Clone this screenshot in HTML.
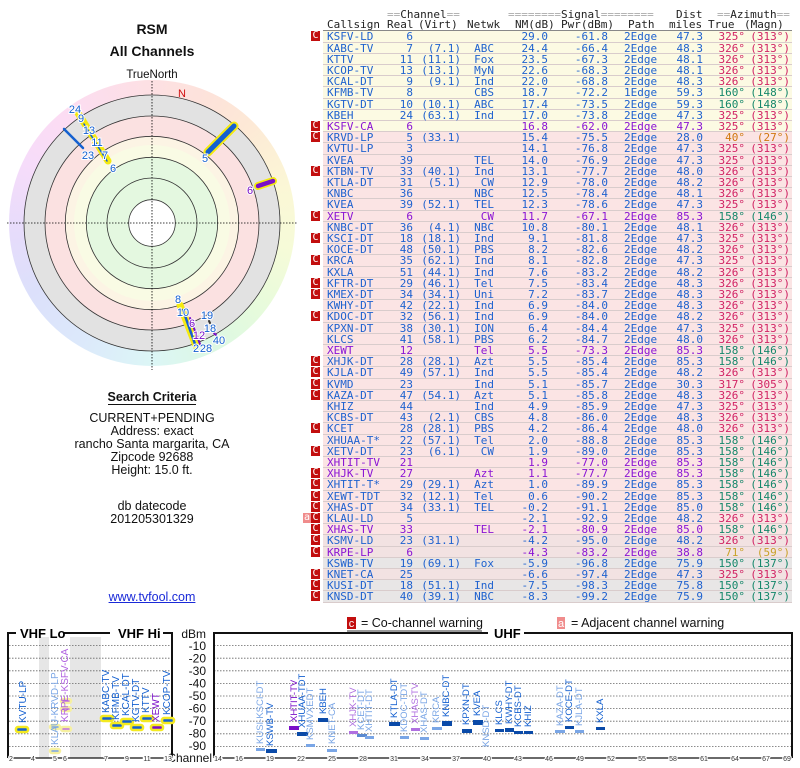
<!DOCTYPE html>
<html><head><meta charset="utf-8"><style>
*{margin:0;padding:0;box-sizing:border-box}
body{width:800px;height:768px;background:#fff;position:relative;overflow:hidden;font-family:"Liberation Sans",sans-serif;color:#111}
.ctr{position:absolute;left:0;width:304px;text-align:center;white-space:nowrap;font-size:12.5px;line-height:13px}
.mono{font-family:"DejaVu Sans Mono","Liberation Mono",monospace;font-size:11px}
.r{position:absolute;left:323px;width:469px;height:11.2px;line-height:11px;border-bottom:1px solid #d9cccc;color:#1f62cf}
.r span{position:absolute;top:0;white-space:pre}
.y{background:#fcfae3}.k{background:#fbe4e4}.q{background:#f2e2e2}.w{background:#e8e6e6}
.a{left:4px}.b{left:60px;width:30px;text-align:right}.c{left:95px;width:43px;text-align:right}
.d{left:140px;width:31px;text-align:right}.e{left:180px;width:45px;text-align:right}
.f{left:240px;width:45px;text-align:right}.g{left:301px}.h{left:335px;width:45px;text-align:right}
.i{left:380px;width:42px;text-align:right}.j{left:422px;width:45px;text-align:right}
.r .m{color:#d12364}.r .n{color:#14876a}.r .o{color:#d0780f}.r .u{color:#c9a22a}
.p{color:#8a14d4}
i{font-style:normal}
.C{position:absolute;left:-12px;top:0;width:9px;height:10px;background:#c20e0e;color:#fff;font-size:10px;line-height:10px;text-align:center}
.A{position:absolute;left:-20px;top:0;width:8px;height:10px;background:#f08c8c;color:#fff;font-size:10px;line-height:10px;text-align:center}
#nm{position:absolute;left:504px;top:31px;width:54px;height:572px;background:rgba(90,70,40,0.09)}
.hd{position:absolute;left:323px;width:469px;height:11px;line-height:11px;color:#222}
.hd .x{position:absolute;top:0;white-space:pre}
.hd .z{color:#aaa}
</style></head><body>

<div class="ctr" style="top:22px;font-weight:bold;font-size:14px;line-height:15px">RSM</div>
<div class="ctr" style="top:44px;font-weight:bold;font-size:14px;line-height:15px">All Channels</div>
<div class="ctr" style="top:69px;font-size:11.5px">TrueNorth</div>

<div style="position:absolute;left:9px;top:80px;width:286px;height:286px;border-radius:50%;background:conic-gradient(#fde0e3 0deg,#fde3da 25deg,#fde9d6 45deg,#fbf7d6 75deg,#f6fbd8 100deg,#e6fbdc 130deg,#dcf8e4 155deg,#dcf6f6 180deg,#dce9fb 210deg,#dce0fb 240deg,#e6dcfb 265deg,#f6dcfa 295deg,#fcdcf3 320deg,#fde0e3 360deg)"></div>
<svg style="position:absolute;left:0;top:0" width="304" height="380">
<circle cx="152" cy="223" r="128" fill="#e2e2e2" stroke="#333" stroke-width="0.8"/>
<circle cx="152" cy="223" r="107" fill="#fbe1e1" stroke="#333" stroke-width="0.8"/>
<circle cx="152" cy="223" r="86.7" fill="#fcf4e4" stroke="#333" stroke-width="0.8"/>
<circle cx="152" cy="223" r="78" fill="#f9fbe4" stroke="none"/>
<circle cx="152" cy="223" r="65.7" fill="#e4f8e0" stroke="#333" stroke-width="0.8"/>
<circle cx="152" cy="223" r="45" fill="#e4f8e0" stroke="#333" stroke-width="0.8"/>
<circle cx="152" cy="223" r="23.3" fill="#fff" stroke="#333" stroke-width="0.8"/>
<line x1="7" y1="223" x2="297" y2="223" stroke="#000" stroke-width="0.8" stroke-dasharray="1.5,1.5"/>
<line x1="152" y1="81" x2="152" y2="370" stroke="#000" stroke-width="0.8" stroke-dasharray="1.5,1.5"/>
<text x="182" y="97" fill="#d01010" font-size="11" text-anchor="middle">N</text>
<g stroke-linecap="round">
<line x1="208" y1="152" x2="234" y2="126" stroke="#f4ea10" stroke-width="9"/>
<line x1="208" y1="152" x2="234" y2="126" stroke="#1460d0" stroke-width="5"/>
<line x1="258" y1="186" x2="273" y2="181" stroke="#f4ea10" stroke-width="8"/>
<line x1="258" y1="186" x2="273" y2="181" stroke="#7a10c8" stroke-width="4.5"/>
<line x1="78" y1="113" x2="108" y2="161" stroke="#f4ea10" stroke-width="7"/>
<line x1="84" y1="124" x2="107" y2="161" stroke="#1460d0" stroke-width="1.5"/>
<line x1="64" y1="129" x2="83" y2="148" stroke="#1460d0" stroke-width="2.5"/>
<line x1="180" y1="305" x2="196" y2="346" stroke="#f4ea10" stroke-width="7"/>
<line x1="183" y1="310" x2="195" y2="344" stroke="#1460d0" stroke-width="2.5"/>
<line x1="190" y1="318" x2="200" y2="344" stroke="#7a10c8" stroke-width="2"/>
<line x1="209" y1="321" x2="210" y2="323" stroke="#333" stroke-width="2"/>
<line x1="214" y1="333" x2="216" y2="335" stroke="#7a10c8" stroke-width="2"/>
</g>
<g font-size="11" fill="#1460d0" stroke="#fff" stroke-width="2" paint-order="stroke" text-anchor="middle">
<text x="205" y="162">5</text><text x="250" y="194" fill="#7a10c8">6</text>
<text x="75" y="113">24</text><text x="81" y="122">9</text><text x="89" y="134">13</text>
<text x="97" y="146">11</text><text x="105" y="159">7</text><text x="113" y="172">6</text>
<text x="88" y="159">23</text>
<text x="178" y="303">8</text><text x="183" y="316">10</text><text x="207" y="319">19</text>
<text x="192" y="327" fill="#7a10c8">6</text><text x="210" y="332">18</text><text x="199" y="339" fill="#7a10c8">12</text>
<text x="219" y="344">40</text><text x="196" y="352">2</text><text x="206" y="352">28</text>
</g>
</svg>

<div class="ctr" style="top:391px;font-weight:bold;font-size:12.5px"><span style="border-bottom:1px solid #111">Search Criteria</span></div>
<div class="ctr" style="top:412px">CURRENT+PENDING</div>
<div class="ctr" style="top:425px">Address: exact</div>
<div class="ctr" style="top:438px">rancho Santa margarita, CA</div>
<div class="ctr" style="top:451px">Zipcode 92688</div>
<div class="ctr" style="top:464px">Height: 15.0 ft.</div>
<div class="ctr" style="top:500px">db datecode</div>
<div class="ctr" style="top:513px">201205301329</div>
<div class="ctr" style="top:591px;color:#1a2ad8;text-decoration:underline">www.tvfool.com</div>

<div class="mono">
<div class="hd" style="top:9px"><span class="x" style="left:64px"><span class="z">==</span>Channel<span class="z">==</span></span><span class="x" style="left:185px"><span class="z">========</span>Signal<span class="z">========</span></span><span class="x" style="left:353px">Dist</span><span class="x" style="left:394px"><span class="z">==</span>Azimuth<span class="z">==</span></span></div>
<div class="hd" style="top:19px;border-bottom:1px solid #888;height:12px"><span class="x" style="left:4px">Callsign</span><span class="x" style="left:64px">Real</span><span class="x" style="left:95px">(Virt)</span><span class="x" style="left:144px">Netwk</span><span class="x" style="left:192px">NM(dB)</span><span class="x" style="left:238px">Pwr(dBm)</span><span class="x" style="left:305px">Path</span><span class="x" style="left:346px">miles</span><span class="x" style="left:385px">True</span><span class="x" style="left:421px">(Magn)</span></div>
<div id="nm"></div>

<div class="r y" style="top:31.4px"><i class="C">C</i><span class="a">KSFV-LD</span><span class="b">6</span><span class="e">29.0</span><span class="f">-61.8</span><span class="g">2Edge</span><span class="h">47.3</span><span class="i m">325°</span><span class="j m">(313°)</span></div>
<div class="r y" style="top:42.6px"><span class="a">KABC-TV</span><span class="b">7</span><span class="c">(7.1)</span><span class="d">ABC</span><span class="e">24.4</span><span class="f">-66.4</span><span class="g">2Edge</span><span class="h">48.3</span><span class="i m">326°</span><span class="j m">(313°)</span></div>
<div class="r y" style="top:53.8px"><span class="a">KTTV</span><span class="b">11</span><span class="c">(11.1)</span><span class="d">Fox</span><span class="e">23.5</span><span class="f">-67.3</span><span class="g">2Edge</span><span class="h">48.1</span><span class="i m">326°</span><span class="j m">(313°)</span></div>
<div class="r y" style="top:65px"><span class="a">KCOP-TV</span><span class="b">13</span><span class="c">(13.1)</span><span class="d">MyN</span><span class="e">22.6</span><span class="f">-68.3</span><span class="g">2Edge</span><span class="h">48.1</span><span class="i m">326°</span><span class="j m">(313°)</span></div>
<div class="r y" style="top:76.2px"><span class="a">KCAL-DT</span><span class="b">9</span><span class="c">(9.1)</span><span class="d">Ind</span><span class="e">22.0</span><span class="f">-68.8</span><span class="g">2Edge</span><span class="h">48.3</span><span class="i m">326°</span><span class="j m">(313°)</span></div>
<div class="r y" style="top:87.4px"><span class="a">KFMB-TV</span><span class="b">8</span><span class="d">CBS</span><span class="e">18.7</span><span class="f">-72.2</span><span class="g">1Edge</span><span class="h">59.3</span><span class="i n">160°</span><span class="j n">(148°)</span></div>
<div class="r y" style="top:98.6px"><span class="a">KGTV-DT</span><span class="b">10</span><span class="c">(10.1)</span><span class="d">ABC</span><span class="e">17.4</span><span class="f">-73.5</span><span class="g">2Edge</span><span class="h">59.3</span><span class="i n">160°</span><span class="j n">(148°)</span></div>
<div class="r y" style="top:109.8px"><span class="a">KBEH</span><span class="b">24</span><span class="c">(63.1)</span><span class="d">Ind</span><span class="e">17.0</span><span class="f">-73.8</span><span class="g">2Edge</span><span class="h">47.3</span><span class="i m">325°</span><span class="j m">(313°)</span></div>
<div class="r y p" style="top:121px"><i class="C">C</i><span class="a">KSFV-CA</span><span class="b">6</span><span class="e">16.8</span><span class="f">-62.0</span><span class="g">2Edge</span><span class="h">47.3</span><span class="i m">325°</span><span class="j m">(313°)</span></div>
<div class="r k" style="top:132.2px"><i class="C">C</i><span class="a">KRVD-LP</span><span class="b">5</span><span class="c">(33.1)</span><span class="e">15.4</span><span class="f">-75.5</span><span class="g">2Edge</span><span class="h">28.0</span><span class="i o">40°</span><span class="j o">(27°)</span></div>
<div class="r k" style="top:143.4px"><span class="a">KVTU-LP</span><span class="b">3</span><span class="e">14.1</span><span class="f">-76.8</span><span class="g">2Edge</span><span class="h">47.3</span><span class="i m">325°</span><span class="j m">(313°)</span></div>
<div class="r k" style="top:154.6px"><span class="a">KVEA</span><span class="b">39</span><span class="d">TEL</span><span class="e">14.0</span><span class="f">-76.9</span><span class="g">2Edge</span><span class="h">47.3</span><span class="i m">325°</span><span class="j m">(313°)</span></div>
<div class="r k" style="top:165.8px"><i class="C">C</i><span class="a">KTBN-TV</span><span class="b">33</span><span class="c">(40.1)</span><span class="d">Ind</span><span class="e">13.1</span><span class="f">-77.7</span><span class="g">2Edge</span><span class="h">48.0</span><span class="i m">326°</span><span class="j m">(313°)</span></div>
<div class="r k" style="top:177px"><span class="a">KTLA-DT</span><span class="b">31</span><span class="c">(5.1)</span><span class="d">CW</span><span class="e">12.9</span><span class="f">-78.0</span><span class="g">2Edge</span><span class="h">48.2</span><span class="i m">326°</span><span class="j m">(313°)</span></div>
<div class="r k" style="top:188.2px"><span class="a">KNBC</span><span class="b">36</span><span class="d">NBC</span><span class="e">12.5</span><span class="f">-78.4</span><span class="g">2Edge</span><span class="h">48.1</span><span class="i m">326°</span><span class="j m">(313°)</span></div>
<div class="r k" style="top:199.4px"><span class="a">KVEA</span><span class="b">39</span><span class="c">(52.1)</span><span class="d">TEL</span><span class="e">12.3</span><span class="f">-78.6</span><span class="g">2Edge</span><span class="h">47.3</span><span class="i m">325°</span><span class="j m">(313°)</span></div>
<div class="r k p" style="top:210.6px"><i class="C">C</i><span class="a">XETV</span><span class="b">6</span><span class="d">CW</span><span class="e">11.7</span><span class="f">-67.1</span><span class="g">2Edge</span><span class="h">85.3</span><span class="i n">158°</span><span class="j n">(146°)</span></div>
<div class="r k" style="top:221.8px"><span class="a">KNBC-DT</span><span class="b">36</span><span class="c">(4.1)</span><span class="d">NBC</span><span class="e">10.8</span><span class="f">-80.1</span><span class="g">2Edge</span><span class="h">48.1</span><span class="i m">326°</span><span class="j m">(313°)</span></div>
<div class="r k" style="top:233px"><i class="C">C</i><span class="a">KSCI-DT</span><span class="b">18</span><span class="c">(18.1)</span><span class="d">Ind</span><span class="e">9.1</span><span class="f">-81.8</span><span class="g">2Edge</span><span class="h">47.3</span><span class="i m">325°</span><span class="j m">(313°)</span></div>
<div class="r k" style="top:244.2px"><span class="a">KOCE-DT</span><span class="b">48</span><span class="c">(50.1)</span><span class="d">PBS</span><span class="e">8.2</span><span class="f">-82.6</span><span class="g">2Edge</span><span class="h">48.2</span><span class="i m">326°</span><span class="j m">(313°)</span></div>
<div class="r k" style="top:255.4px"><i class="C">C</i><span class="a">KRCA</span><span class="b">35</span><span class="c">(62.1)</span><span class="d">Ind</span><span class="e">8.1</span><span class="f">-82.8</span><span class="g">2Edge</span><span class="h">47.3</span><span class="i m">325°</span><span class="j m">(313°)</span></div>
<div class="r k" style="top:266.6px"><span class="a">KXLA</span><span class="b">51</span><span class="c">(44.1)</span><span class="d">Ind</span><span class="e">7.6</span><span class="f">-83.2</span><span class="g">2Edge</span><span class="h">48.2</span><span class="i m">326°</span><span class="j m">(313°)</span></div>
<div class="r k" style="top:277.8px"><i class="C">C</i><span class="a">KFTR-DT</span><span class="b">29</span><span class="c">(46.1)</span><span class="d">Tel</span><span class="e">7.5</span><span class="f">-83.4</span><span class="g">2Edge</span><span class="h">48.3</span><span class="i m">326°</span><span class="j m">(313°)</span></div>
<div class="r k" style="top:289px"><i class="C">C</i><span class="a">KMEX-DT</span><span class="b">34</span><span class="c">(34.1)</span><span class="d">Uni</span><span class="e">7.2</span><span class="f">-83.7</span><span class="g">2Edge</span><span class="h">48.3</span><span class="i m">326°</span><span class="j m">(313°)</span></div>
<div class="r k" style="top:300.2px"><span class="a">KWHY-DT</span><span class="b">42</span><span class="c">(22.1)</span><span class="d">Ind</span><span class="e">6.9</span><span class="f">-84.0</span><span class="g">2Edge</span><span class="h">48.3</span><span class="i m">326°</span><span class="j m">(313°)</span></div>
<div class="r k" style="top:311.4px"><i class="C">C</i><span class="a">KDOC-DT</span><span class="b">32</span><span class="c">(56.1)</span><span class="d">Ind</span><span class="e">6.9</span><span class="f">-84.0</span><span class="g">2Edge</span><span class="h">48.2</span><span class="i m">326°</span><span class="j m">(313°)</span></div>
<div class="r k" style="top:322.6px"><span class="a">KPXN-DT</span><span class="b">38</span><span class="c">(30.1)</span><span class="d">ION</span><span class="e">6.4</span><span class="f">-84.4</span><span class="g">2Edge</span><span class="h">47.3</span><span class="i m">325°</span><span class="j m">(313°)</span></div>
<div class="r k" style="top:333.8px"><span class="a">KLCS</span><span class="b">41</span><span class="c">(58.1)</span><span class="d">PBS</span><span class="e">6.2</span><span class="f">-84.7</span><span class="g">2Edge</span><span class="h">48.0</span><span class="i m">326°</span><span class="j m">(313°)</span></div>
<div class="r k p" style="top:345px"><span class="a">XEWT</span><span class="b">12</span><span class="d">Tel</span><span class="e">5.5</span><span class="f">-73.3</span><span class="g">2Edge</span><span class="h">85.3</span><span class="i n">158°</span><span class="j n">(146°)</span></div>
<div class="r k" style="top:356.2px"><i class="C">C</i><span class="a">XHJK-DT</span><span class="b">28</span><span class="c">(28.1)</span><span class="d">Azt</span><span class="e">5.5</span><span class="f">-85.4</span><span class="g">2Edge</span><span class="h">85.3</span><span class="i n">158°</span><span class="j n">(146°)</span></div>
<div class="r k" style="top:367.4px"><i class="C">C</i><span class="a">KJLA-DT</span><span class="b">49</span><span class="c">(57.1)</span><span class="d">Ind</span><span class="e">5.5</span><span class="f">-85.4</span><span class="g">2Edge</span><span class="h">48.2</span><span class="i m">326°</span><span class="j m">(313°)</span></div>
<div class="r k" style="top:378.6px"><i class="C">C</i><span class="a">KVMD</span><span class="b">23</span><span class="d">Ind</span><span class="e">5.1</span><span class="f">-85.7</span><span class="g">2Edge</span><span class="h">30.3</span><span class="i m">317°</span><span class="j m">(305°)</span></div>
<div class="r k" style="top:389.8px"><i class="C">C</i><span class="a">KAZA-DT</span><span class="b">47</span><span class="c">(54.1)</span><span class="d">Azt</span><span class="e">5.1</span><span class="f">-85.8</span><span class="g">2Edge</span><span class="h">48.3</span><span class="i m">326°</span><span class="j m">(313°)</span></div>
<div class="r k" style="top:401px"><span class="a">KHIZ</span><span class="b">44</span><span class="d">Ind</span><span class="e">4.9</span><span class="f">-85.9</span><span class="g">2Edge</span><span class="h">47.3</span><span class="i m">325°</span><span class="j m">(313°)</span></div>
<div class="r k" style="top:412.2px"><span class="a">KCBS-DT</span><span class="b">43</span><span class="c">(2.1)</span><span class="d">CBS</span><span class="e">4.8</span><span class="f">-86.0</span><span class="g">2Edge</span><span class="h">48.3</span><span class="i m">326°</span><span class="j m">(313°)</span></div>
<div class="r k" style="top:423.4px"><i class="C">C</i><span class="a">KCET</span><span class="b">28</span><span class="c">(28.1)</span><span class="d">PBS</span><span class="e">4.2</span><span class="f">-86.4</span><span class="g">2Edge</span><span class="h">48.0</span><span class="i m">326°</span><span class="j m">(313°)</span></div>
<div class="r k" style="top:434.6px"><span class="a">XHUAA-T*</span><span class="b">22</span><span class="c">(57.1)</span><span class="d">Tel</span><span class="e">2.0</span><span class="f">-88.8</span><span class="g">2Edge</span><span class="h">85.3</span><span class="i n">158°</span><span class="j n">(146°)</span></div>
<div class="r k" style="top:445.8px"><i class="C">C</i><span class="a">XETV-DT</span><span class="b">23</span><span class="c">(6.1)</span><span class="d">CW</span><span class="e">1.9</span><span class="f">-89.0</span><span class="g">2Edge</span><span class="h">85.3</span><span class="i n">158°</span><span class="j n">(146°)</span></div>
<div class="r k p" style="top:457px"><span class="a">XHTIT-TV</span><span class="b">21</span><span class="e">1.9</span><span class="f">-77.0</span><span class="g">2Edge</span><span class="h">85.3</span><span class="i n">158°</span><span class="j n">(146°)</span></div>
<div class="r k p" style="top:468.2px"><i class="C">C</i><span class="a">XHJK-TV</span><span class="b">27</span><span class="d">Azt</span><span class="e">1.1</span><span class="f">-77.7</span><span class="g">2Edge</span><span class="h">85.3</span><span class="i n">158°</span><span class="j n">(146°)</span></div>
<div class="r k" style="top:479.4px"><i class="C">C</i><span class="a">XHTIT-T*</span><span class="b">29</span><span class="c">(29.1)</span><span class="d">Azt</span><span class="e">1.0</span><span class="f">-89.9</span><span class="g">2Edge</span><span class="h">85.3</span><span class="i n">158°</span><span class="j n">(146°)</span></div>
<div class="r k" style="top:490.6px"><i class="C">C</i><span class="a">XEWT-TDT</span><span class="b">32</span><span class="c">(12.1)</span><span class="d">Tel</span><span class="e">0.6</span><span class="f">-90.2</span><span class="g">2Edge</span><span class="h">85.3</span><span class="i n">158°</span><span class="j n">(146°)</span></div>
<div class="r k" style="top:501.8px"><i class="C">C</i><span class="a">XHAS-DT</span><span class="b">34</span><span class="c">(33.1)</span><span class="d">TEL</span><span class="e">-0.2</span><span class="f">-91.1</span><span class="g">2Edge</span><span class="h">85.0</span><span class="i n">158°</span><span class="j n">(146°)</span></div>
<div class="r k" style="top:513px"><i class="A">a</i><i class="C">C</i><span class="a">KLAU-LD</span><span class="b">5</span><span class="e">-2.1</span><span class="f">-92.9</span><span class="g">2Edge</span><span class="h">48.2</span><span class="i m">326°</span><span class="j m">(313°)</span></div>
<div class="r k p" style="top:524.2px"><i class="C">C</i><span class="a">XHAS-TV</span><span class="b">33</span><span class="d">TEL</span><span class="e">-2.1</span><span class="f">-80.9</span><span class="g">2Edge</span><span class="h">85.0</span><span class="i n">158°</span><span class="j n">(146°)</span></div>
<div class="r q" style="top:535.4px"><i class="C">C</i><span class="a">KSMV-LD</span><span class="b">23</span><span class="c">(31.1)</span><span class="e">-4.2</span><span class="f">-95.0</span><span class="g">2Edge</span><span class="h">48.2</span><span class="i m">326°</span><span class="j m">(313°)</span></div>
<div class="r q p" style="top:546.6px"><i class="C">C</i><span class="a">KRPE-LP</span><span class="b">6</span><span class="e">-4.3</span><span class="f">-83.2</span><span class="g">2Edge</span><span class="h">38.8</span><span class="i u">71°</span><span class="j u">(59°)</span></div>
<div class="r w" style="top:557.8px"><span class="a">KSWB-TV</span><span class="b">19</span><span class="c">(69.1)</span><span class="d">Fox</span><span class="e">-5.9</span><span class="f">-96.8</span><span class="g">2Edge</span><span class="h">75.9</span><span class="i n">150°</span><span class="j n">(137°)</span></div>
<div class="r q" style="top:569px"><i class="C">C</i><span class="a">KNET-CA</span><span class="b">25</span><span class="e">-6.6</span><span class="f">-97.4</span><span class="g">2Edge</span><span class="h">47.3</span><span class="i m">325°</span><span class="j m">(313°)</span></div>
<div class="r w" style="top:580.2px"><i class="C">C</i><span class="a">KUSI-DT</span><span class="b">18</span><span class="c">(51.1)</span><span class="d">Ind</span><span class="e">-7.5</span><span class="f">-98.3</span><span class="g">2Edge</span><span class="h">75.8</span><span class="i n">150°</span><span class="j n">(137°)</span></div>
<div class="r w" style="top:591.4px"><i class="C">C</i><span class="a">KNSD-DT</span><span class="b">40</span><span class="c">(39.1)</span><span class="d">NBC</span><span class="e">-8.3</span><span class="f">-99.2</span><span class="g">2Edge</span><span class="h">75.9</span><span class="i n">150°</span><span class="j n">(137°)</span></div>
</div>

<svg style="position:absolute;left:0;top:612px" width="800" height="156" font-family="Liberation Sans, sans-serif">
<rect x="347" y="5" width="9" height="12" fill="#c20e0e"/><text x="351.5" y="15" fill="#fff" font-size="11" text-anchor="middle">c</text>
<text x="361" y="15" font-size="12.5" fill="#111">= Co-channel warning</text>
<rect x="557" y="5" width="8" height="12" fill="#f08c8c"/><text x="561" y="15" fill="#fff" font-size="11" text-anchor="middle">a</text>
<text x="571" y="15" font-size="12.5" fill="#111">= Adjacent channel warning</text>
<line x1="347" y1="19" x2="482" y2="19" stroke="#333" stroke-width="1"/>
<rect x="39" y="25" width="10" height="121" fill="#e6e6e6"/>
<rect x="70" y="25" width="31" height="121" fill="#e6e6e6"/>
<g stroke="#666" stroke-width="0.8" stroke-dasharray="1.5,1.5">
<line x1="9" y1="33.6" x2="172" y2="33.6"/><line x1="9" y1="46.2" x2="172" y2="46.2"/><line x1="9" y1="58.8" x2="172" y2="58.8"/><line x1="9" y1="71.4" x2="172" y2="71.4"/><line x1="9" y1="84" x2="172" y2="84"/><line x1="9" y1="96.6" x2="172" y2="96.6"/><line x1="9" y1="109.2" x2="172" y2="109.2"/><line x1="9" y1="121.8" x2="172" y2="121.8"/><line x1="9" y1="134.4" x2="172" y2="134.4"/>
<line x1="214" y1="33.6" x2="792" y2="33.6"/><line x1="214" y1="46.2" x2="792" y2="46.2"/><line x1="214" y1="58.8" x2="792" y2="58.8"/><line x1="214" y1="71.4" x2="792" y2="71.4"/><line x1="214" y1="84" x2="792" y2="84"/><line x1="214" y1="96.6" x2="792" y2="96.6"/><line x1="214" y1="109.2" x2="792" y2="109.2"/><line x1="214" y1="121.8" x2="792" y2="121.8"/><line x1="214" y1="134.4" x2="792" y2="134.4"/>
</g>
<g stroke="#111" stroke-width="2" fill="none">
<polyline points="16,21 8,21 8,146"/><line x1="63" y1="21" x2="110" y2="21"/><polyline points="163,21 172,21 172,146"/>
<polyline points="214,146 214,21 270,21 488,21"/><polyline points="524,21 792,21 792,146"/>
</g>
<g stroke="#111" stroke-width="1.2"><line x1="8" y1="146" x2="172" y2="146"/><line x1="214" y1="146" x2="792" y2="146"/></g>
<text x="20" y="26" font-size="13" font-weight="bold">VHF Lo</text>
<text x="118" y="26" font-size="13" font-weight="bold">VHF Hi</text>
<text x="494" y="26" font-size="13" font-weight="bold">UHF</text>
<g font-size="12" fill="#111" text-anchor="end"><text x="206" y="26">dBm</text><text x="206" y="38">-10</text><text x="206" y="50.5">-20</text><text x="206" y="63">-30</text><text x="206" y="75.5">-40</text><text x="206" y="88">-50</text><text x="206" y="100.5">-60</text><text x="206" y="113">-70</text><text x="206" y="125.5">-80</text><text x="206" y="138">-90</text><text x="212" y="150">Channel</text></g>
<g font-size="7" fill="#333" text-anchor="middle" stroke="#fff" stroke-width="2.5" paint-order="stroke">
<text x="11" y="149">2</text><text x="33" y="149">4</text><text x="55" y="149">5</text><text x="65" y="149">6</text><text x="106" y="149">7</text><text x="127" y="149">9</text><text x="147" y="149">11</text><text x="168" y="149">13</text>
<text x="218" y="149">14</text><text x="239" y="149">16</text><text x="270" y="149">19</text><text x="301" y="149">22</text><text x="332" y="149">25</text><text x="363" y="149">28</text><text x="394" y="149">31</text><text x="425" y="149">34</text><text x="456" y="149">37</text><text x="487" y="149">40</text><text x="518" y="149">43</text><text x="549" y="149">46</text><text x="580" y="149">49</text><text x="611" y="149">52</text><text x="642" y="149">55</text><text x="673" y="149">58</text><text x="704" y="149">61</text><text x="735" y="149">64</text><text x="766" y="149">67</text><text x="787" y="149">69</text>
</g>
<g stroke="#f4ea20" stroke-width="2.5">
<rect x="16" y="115" width="12" height="5" rx="2" fill="#1460d0"/>
<rect x="50" y="137" width="10" height="4" rx="2" fill="#7aa6e6" stroke="#f6f0a0"/>
<rect x="50" y="113" width="10" height="4" rx="2" fill="#7aa6e6" stroke="#f6f0a0"/>
<rect x="61" y="87" width="10" height="4" rx="2" fill="#c070e0" stroke="#f6f0a0"/>
<rect x="61" y="95" width="10" height="4" rx="2" fill="#c070e0" stroke="#f6f0a0"/>
<rect x="61" y="115" width="10" height="4" rx="2" fill="#c070e0" stroke="#f6f0a0"/>
<rect x="101" y="104" width="12" height="5" rx="2" fill="#1460d0"/>
<rect x="111" y="111" width="12" height="5" rx="2" fill="#1460d0"/>
<rect x="121" y="107" width="12" height="5" rx="2" fill="#1460d0"/>
<rect x="131" y="113" width="12" height="5" rx="2" fill="#1460d0"/>
<rect x="141" y="104" width="12" height="5" rx="2" fill="#1460d0"/>
<rect x="151" y="113" width="12" height="5" rx="2" fill="#7a10c8"/>
<rect x="162" y="106" width="12" height="5" rx="2" fill="#1460d0"/>
</g>
<g font-size="10" fill="#1460d0">
<text transform="translate(26,111) rotate(-90)">KVTU-LP</text>
<text transform="translate(58,133) rotate(-90)" fill="#7aa6e6">KLAU-KRVD-LP</text>
<text transform="translate(68,110) rotate(-90)" fill="#b060e0">KRPE-KSFV-CA</text>
<text transform="translate(109,101) rotate(-90)">KABC-TV</text>
<text transform="translate(119,108) rotate(-90)">KFMB-TV</text>
<text transform="translate(129,104) rotate(-90)">KCAL-DT</text>
<text transform="translate(139,110) rotate(-90)">KGTV-DT</text>
<text transform="translate(149,101) rotate(-90)">KTTV</text>
<text transform="translate(159,110) rotate(-90)" fill="#7a10c8">XEWT</text>
<text transform="translate(170,103) rotate(-90)">KCOP-TV</text>
</g>
<g>
<rect x="256" y="136" width="9" height="3" fill="#7aa6e6"/>
<rect x="266" y="137" width="11" height="4" fill="#0a4aa8"/>
<rect x="289" y="114" width="10" height="4" fill="#7a10c8"/>
<rect x="297" y="120" width="11" height="4" fill="#0a4aa8"/>
<rect x="306" y="132" width="9" height="3" fill="#7aa6e6"/>
<rect x="318" y="106" width="10" height="4" fill="#0a4aa8"/>
<rect x="327" y="137" width="10" height="3" fill="#7aa6e6"/>
<rect x="349" y="119" width="9" height="3" fill="#b070e0"/>
<rect x="357" y="122" width="10" height="3" fill="#5a8ad0"/>
<rect x="365" y="124" width="9" height="3" fill="#7aa6e6"/>
<rect x="389" y="110" width="11" height="4" fill="#0a4aa8"/>
<rect x="400" y="124" width="9" height="3" fill="#7aa6e6"/>
<rect x="411" y="116" width="9" height="3" fill="#b070e0"/>
<rect x="420" y="125" width="9" height="3" fill="#7aa6e6"/>
<rect x="432" y="115" width="10" height="3" fill="#7aa6e6"/>
<rect x="442" y="109" width="10" height="5" fill="#0a4aa8"/>
<rect x="462" y="117" width="10" height="4" fill="#0a4aa8"/>
<rect x="473" y="108" width="10" height="5" fill="#0a4aa8"/>
<rect x="495" y="117" width="9" height="3" fill="#0a4aa8"/>
<rect x="505" y="116" width="9" height="4" fill="#0a4aa8"/>
<rect x="514" y="119" width="9" height="3" fill="#0a4aa8"/>
<rect x="524" y="119" width="9" height="3" fill="#0a4aa8"/>
<rect x="555" y="118" width="10" height="3" fill="#7aa6e6"/>
<rect x="565" y="114" width="9" height="3" fill="#0a4aa8"/>
<rect x="575" y="118" width="9" height="3" fill="#7aa6e6"/>
<rect x="596" y="115" width="9" height="3" fill="#0a4aa8"/>
</g>
<g font-size="9.5" fill="#1460d0">
<text transform="translate(263,132) rotate(-90)" fill="#7aa6e6">KUSI-KSCI-DT</text>
<text transform="translate(273,134) rotate(-90)">KSWB-TV</text>
<text transform="translate(297,110) rotate(-90)" fill="#7a10c8">XHTIT-TV</text>
<text transform="translate(305,116) rotate(-90)">XHUAA-TDT</text>
<text transform="translate(313,128) rotate(-90)" fill="#7aa6e6">KSMVXEDT</text>
<text transform="translate(326,102) rotate(-90)">KBEH</text>
<text transform="translate(335,132) rotate(-90)" fill="#7aa6e6">KNET-CA</text>
<text transform="translate(356,115) rotate(-90)" fill="#b070e0">XHJK-TV</text>
<text transform="translate(364,118) rotate(-90)" fill="#7aa6e6">KCET-DT</text>
<text transform="translate(372,120) rotate(-90)" fill="#7aa6e6">XHTIT-DT</text>
<text transform="translate(397,106) rotate(-90)">KTLA-DT</text>
<text transform="translate(407,120) rotate(-90)" fill="#7aa6e6">KDOC-TDT</text>
<text transform="translate(418,112) rotate(-90)" fill="#b070e0">XHAS-TV</text>
<text transform="translate(427,121) rotate(-90)" fill="#7aa6e6">XHAS-DT</text>
<text transform="translate(439,111) rotate(-90)" fill="#7aa6e6">KRCA</text>
<text transform="translate(449,105) rotate(-90)">KNBC-DT</text>
<text transform="translate(469,113) rotate(-90)">KPXN-DT</text>
<text transform="translate(480,104) rotate(-90)">KVEA</text>
<text transform="translate(489,135) rotate(-90)" fill="#7aa6e6">KNSD-DT</text>
<text transform="translate(502,113) rotate(-90)">KLCS</text>
<text transform="translate(512,112) rotate(-90)">KWHY-DT</text>
<text transform="translate(521,115) rotate(-90)">KCBS-DT</text>
<text transform="translate(531,115) rotate(-90)">KHIZ</text>
<text transform="translate(563,114) rotate(-90)" fill="#7aa6e6">KAZA-DT</text>
<text transform="translate(572,110) rotate(-90)">KOCE-DT</text>
<text transform="translate(582,114) rotate(-90)" fill="#7aa6e6">KJLA-DT</text>
<text transform="translate(603,111) rotate(-90)">KXLA</text>
</g>
</svg>
</body></html>
